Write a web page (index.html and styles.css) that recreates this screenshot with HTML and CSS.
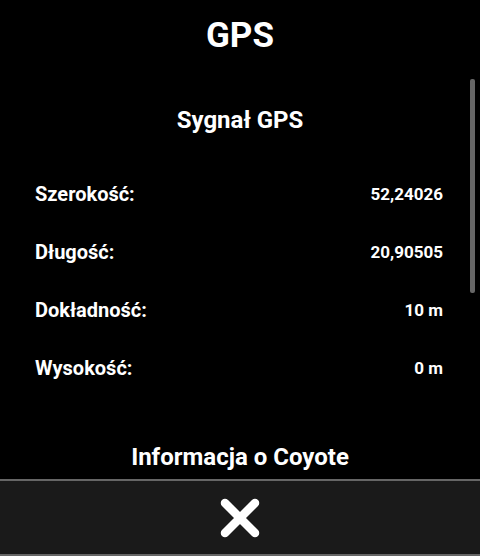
FILE: index.html
```html
<!DOCTYPE html>
<html lang="pl">
<head>
<meta charset="utf-8">
<title>GPS</title>
<link rel="stylesheet" href="styles.css">
</head>
<body>
<div class="screen">
  <header class="title">GPS</header>
  <main class="scroll">
    <h2 class="section">Sygnał GPS</h2>
    <div class="row"><span class="label">Szerokość:</span><span class="value">52,24026</span></div>
    <div class="row"><span class="label">Długość:</span><span class="value">20,90505</span></div>
    <div class="row"><span class="label">Dokładność:</span><span class="value">10 m</span></div>
    <div class="row"><span class="label">Wysokość:</span><span class="value">0 m</span></div>
    <h2 class="section section-next">Informacja o Coyote</h2>
    <div class="scrollbar"></div>
  </main>
  <footer class="footer">
    <svg class="close" width="40" height="40" viewBox="0 0 40 40" aria-label="Zamknij">
      <path d="M5 5 L35 35 M35 5 L5 35" stroke="#fff" stroke-width="8.5" stroke-linecap="round" fill="none"/>
    </svg>
  </footer>
</div>
</body>
</html>
```
FILE: styles.css
```css
html, body {
  margin: 0;
  padding: 0;
  background: #000;
}
body {
  font-family: Roboto, "Liberation Sans", sans-serif;
  color: #fff;
}
.screen {
  width: 480px;
  height: 556px;
  display: flex;
  flex-direction: column;
  overflow: hidden;
}
.title {
  height: 72px;
  line-height: 72px;
  font-size: 35px;
  font-weight: 700;
  text-align: center;
  flex: none;
}
.scroll {
  position: relative;
  flex: 1;
  overflow: hidden;
}
.section {
  margin: 34px 0 31px;
  font-size: 24px;
  line-height: 28px;
  font-weight: 700;
  text-align: center;
}
.section-next {
  margin-top: 46px;
  margin-bottom: 0;
}
.row {
  height: 58px;
  display: flex;
  align-items: center;
  justify-content: space-between;
  padding: 0 37px 0 35px;
  line-height: 58px;
}
.label {
  font-size: 20px;
  font-weight: 700;
}
.value {
  font-size: 17px;
  font-weight: 700;
}
.scrollbar {
  position: absolute;
  top: 7px;
  left: 470px;
  width: 5px;
  height: 214px;
  background: #666;
  border-radius: 2px;
}
.footer {
  flex: none;
  height: 73px;
  background: #1a1a1a;
  border-top: 2px solid #666;
  border-bottom: 2px solid #666;
  display: flex;
  align-items: center;
  justify-content: center;
}
.close {
  display: block;
}
```
